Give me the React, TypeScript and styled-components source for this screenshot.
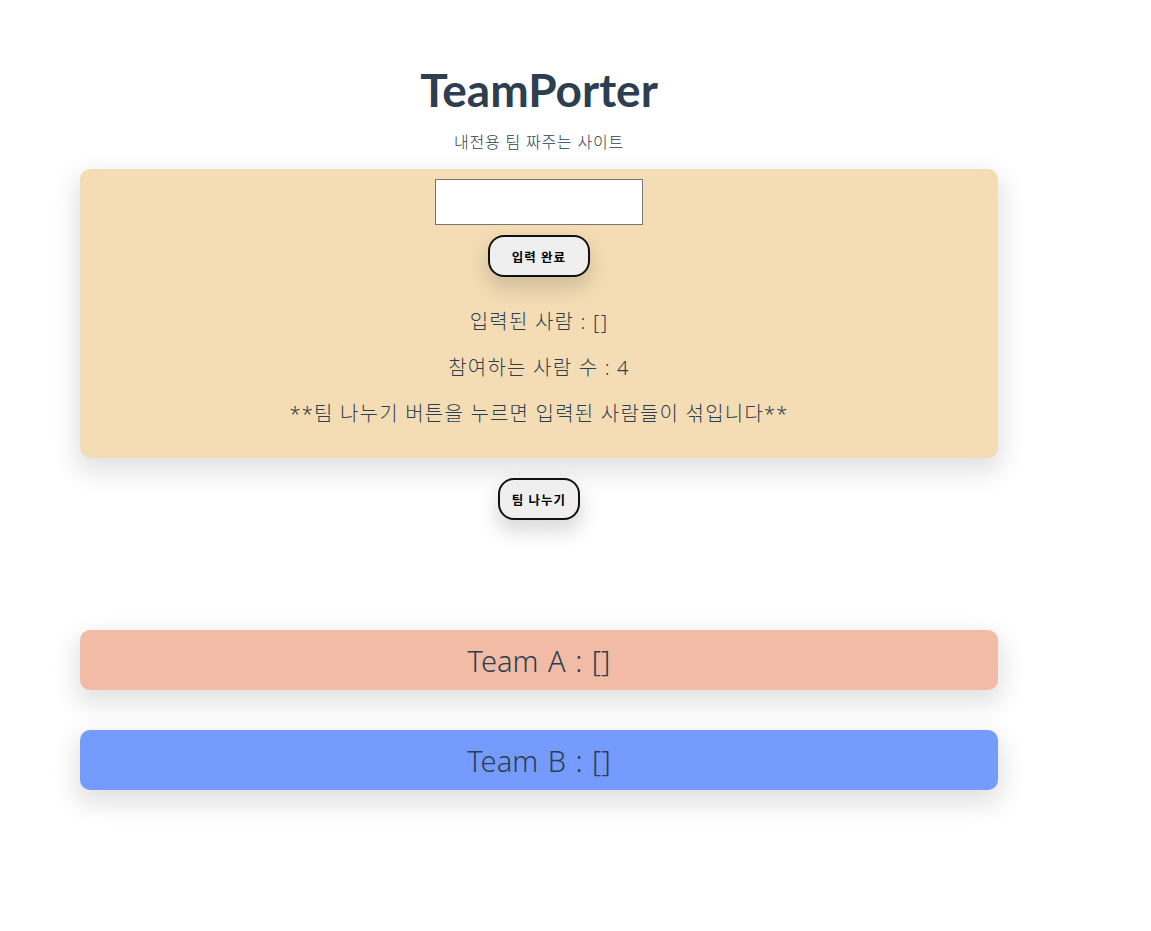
import React, { useState } from "react";
import styled, { createGlobalStyle } from "styled-components";

const GlobalStyle = createGlobalStyle`
    body {
        margin: 0;
        background: #ffffff;
        font-family: "Noto Sans", "Noto Sans CJK KR", sans-serif;
        color: #2c3e50;
    }
`;

const Page = styled.div`
    width: 918px;
    margin-left: 80px;
    padding: 60px 0 120px;
    display: flex;
    flex-direction: column;
    align-items: center;
    text-align: center;
`;

const Title = styled.h1`
    margin: 0;
    font-family: Lato, "Noto Sans", sans-serif;
    font-size: 46px;
    font-weight: 700;
    line-height: 60px;
`;

const Subtitle = styled.p`
    margin: 11px 0 16px;
    font-size: 16px;
    letter-spacing: 0.8px;
    line-height: 22px;
    font-weight: 300;
`;

const InputCard = styled.div`
    width: 100%;
    box-sizing: border-box;
    background-color: #f4ddb4;
    border-radius: 10px;
    box-shadow: 0 10px 24px 4px rgba(20, 20, 20, 0.12);
    padding: 10px 0 21px;
    display: flex;
    flex-direction: column;
    align-items: center;
`;

const NameInput = styled.input`
    width: 208px;
    height: 46px;
    box-sizing: border-box;
    border: 1px solid #767676;
    background: #fff;
    outline: none;
`;

const Button = styled.button<{ $w: number; $top: number }>`
    width: ${(p) => p.$w}px;
    height: 42px;
    margin-top: ${(p) => p.$top}px;
    border: 2px solid #111;
    border-radius: 16px;
    background: #efefef;
    color: #000;
    font-family: "Noto Sans", "Noto Sans CJK KR", sans-serif;
    font-size: 12.5px;
    letter-spacing: 1px;
    font-weight: 700;
    box-shadow: 0 10px 18px 2px rgba(60, 60, 60, 0.18);
    cursor: pointer;
`;

const Info = styled.p`
    margin: 0;
    font-size: 20px;
    letter-spacing: 1.2px;
    font-weight: 300;
    line-height: 46px;
`;

const InfoList = styled.div`
    margin-top: 22px;
`;

const Teams = styled.div`
    width: 100%;
    margin-top: 110px;
    display: flex;
    flex-direction: column;
    gap: 40px;
`;

const TeamBar = styled.div<{ $bg: string }>`
    height: 60px;
    border-radius: 10px;
    background-color: ${(p) => p.$bg};
    box-shadow: 0 10px 24px 4px rgba(20, 20, 20, 0.12);
    display: flex;
    align-items: center;
    justify-content: center;
    font-size: 29px;
    font-weight: 300;
    word-spacing: 2px;
`;

export default function App() {
    const [name, setName] = useState("");
    const people: string[] = [];

    return (
        <>
            <GlobalStyle />
            <Page>
                <Title>TeamPorter</Title>
                <Subtitle>내전용 팀 짜주는 사이트</Subtitle>
                <InputCard>
                    <NameInput value={name} onChange={(e) => setName(e.target.value)} />
                    <Button $w={102} $top={10}>입력 완료</Button>
                    <InfoList>
                        <Info>입력된 사람 : [{people.join(", ")}]</Info>
                        <Info>참여하는 사람 수 : 4</Info>
                        <Info>**팀 나누기 버튼을 누르면 입력된 사람들이 섞입니다**</Info>
                    </InfoList>
                </InputCard>
                <Button $w={82} $top={20}>팀 나누기</Button>
                <Teams>
                    <TeamBar $bg="#f2bba6">Team A : []</TeamBar>
                    <TeamBar $bg="#759bfe">Team B : []</TeamBar>
                </Teams>
            </Page>
        </>
    );
}
